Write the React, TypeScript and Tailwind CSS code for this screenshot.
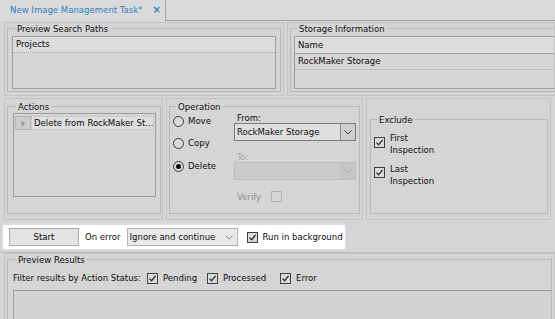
import React from 'react';

const font = "font-['DejaVu_Sans_Condensed','Liberation_Sans',sans-serif]";

function GroupBox({ title, className, children }: { title: string; className?: string; children?: React.ReactNode }) {
    return (
        <fieldset className={`border border-[#b7b7b7] ${className ?? ''}`}>
            <legend className="ml-[3px] px-[2px] leading-[11px] text-[#111]">{title}</legend>
            {children}
        </fieldset>
    );
}

function CheckBox({ checked, disabled }: { checked?: boolean; disabled?: boolean }) {
    return (
        <span
            className={`flex h-[11px] w-[11px] shrink-0 items-center justify-center border ${
                disabled ? 'border-[#b0b0b0] bg-[#d6d6d6]' : 'border-[#3e3e3e] bg-[#dadada]'
            }`}
        >
            {checked && (
                <svg width="9" height="9" viewBox="0 0 9 9">
                    <path d="M1.5 4.6 L3.6 6.7 L7.6 1.9" fill="none" stroke="#2a2a2a" strokeWidth="1.3" />
                </svg>
            )}
        </span>
    );
}

function Radio({ label, checked }: { label: string; checked?: boolean }) {
    return (
        <div className="flex h-[16px] items-center gap-[4px]">
            <span className="flex h-[11px] w-[11px] items-center justify-center rounded-full border border-[#3a3a3a] bg-[#dadada]">
                {checked && <span className="h-[5px] w-[5px] rounded-full bg-[#111]" />}
            </span>
            <span>{label}</span>
        </div>
    );
}

function Chevron({ color }: { color: string }) {
    return (
        <svg width="8" height="5" viewBox="0 0 8 5">
            <path d="M0.5 0.5 L4 4 L7.5 0.5" fill="none" stroke={color} strokeWidth="1" />
        </svg>
    );
}

function Select({ value, disabled }: { value?: string; disabled?: boolean }) {
    return (
        <div
            className={`flex h-[18px] w-[122px] border ${
                disabled ? 'border-[#bcbcbc] bg-[#cbcbcb]' : 'border-[#7c7c7c] bg-[#dedede]'
            }`}
        >
            <div className="flex flex-1 items-center pl-[2px] text-[#111]">{value}</div>
            <div
                className={`flex w-[15px] items-center justify-center border-l ${
                    disabled ? 'border-[#c4c4c4] bg-[#c6c6c6]' : 'border-[#8a8a8a] bg-[#cfcfcf]'
                }`}
            >
                <Chevron color={disabled ? '#a9a9a9' : '#444'} />
            </div>
        </div>
    );
}

export default function App() {
    return (
        <div className={`h-[319px] w-[555px] overflow-hidden bg-[#d5d5d5] text-[9.5px] text-[#0d0d0d] ${font}`}>
            {/* tab strip */}
            <div className="flex h-[21px] bg-[#d9d9d9]">
                <div className="flex w-[166px] items-center border-r border-[#a3a3a3] bg-[#dadada] pl-[10px]">
                    <span className="text-[#2f7fc4]">New Image Management Task*</span>
                    <span className="ml-[10px] text-[11px] font-bold text-[#2f7fc4]">×</span>
                </div>
                <div className="flex-1 border-b border-[#a3a3a3]" />
            </div>

            {/* row 1 */}
            <div className="flex h-[75px] gap-[3px] pl-[4px] pt-[1px]">
                <div className="w-[282px] border border-[#c3c3c3] px-[2px]">
                    <GroupBox title="Preview Search Paths" className="h-[69px] pl-[4px] pr-[4px]">
                        <div className="mt-[2px] h-[53px] border border-[#9d9d9d]">
                            <div className="flex h-[16px] items-center border-b border-dotted border-[#a6a6a6] bg-[#dcdcdc] pl-[3px]">
                                Projects
                            </div>
                        </div>
                    </GroupBox>
                </div>
                <div className="w-[270px] border border-[#c3c3c3] pl-[2px]">
                    <GroupBox title="Storage Information" className="h-[69px] border-r-0 pl-[3px]">
                        <div className="mt-[2px] h-[53px] border border-r-0 border-[#9d9d9d]">
                            <div className="flex h-[17px] items-center border-b border-[#a0a0a0] bg-[#dcdcdc] pl-[3px]">
                                Name
                            </div>
                            <div className="flex h-[16px] items-center border-b border-dotted border-[#a6a6a6] pl-[3px]">
                                RockMaker Storage
                            </div>
                        </div>
                    </GroupBox>
                </div>
            </div>

            {/* row 2 */}
            <div className="mt-[2px] flex h-[122px] gap-[3px] pl-[4px]">
                <div className="w-[159px] border border-[#c3c3c3] px-[2px] pt-[2px]">
                    <GroupBox title="Actions" className="h-[113px] pl-[5px] pr-[4px]">
                        <div className="mt-[1px] h-[84px] border border-[#9d9d9d] px-[1px] pt-[2px]">
                            <div className="flex h-[14px]">
                                <div className="flex w-[16px] items-center justify-center border border-[#b4b4b4] bg-[#cdcdcd]">
                                    <svg width="5" height="7" viewBox="0 0 5 7">
                                        <path d="M0.5 0.5 L4.5 3.5 L0.5 6.5 Z" fill="#9a9a9a" />
                                    </svg>
                                </div>
                                <div className="flex flex-1 items-center overflow-hidden whitespace-nowrap border border-dotted border-[#b9b9b9] bg-[#dedede] pl-[2px]">
                                    Delete from RockMaker St...
                                </div>
                            </div>
                        </div>
                    </GroupBox>
                </div>

                <div className="w-[197px] border border-[#c3c3c3] px-[2px] pt-[2px]">
                    <GroupBox title="Operation" className="flex h-[113px] pl-[3px]">
                        <div className="flex w-[61px] flex-col pt-[1px]">
                            <Radio label="Move" />
                            <div className="mt-[6px]">
                                <Radio label="Copy" />
                            </div>
                            <div className="mt-[7px]">
                                <Radio label="Delete" checked />
                            </div>
                        </div>
                        <div className="flex flex-col">
                            <div className="pl-[3px] leading-[11px]">From:</div>
                            <Select value="RockMaker Storage" />
                            <div className="mt-[10px] pl-[3px] leading-[11px] text-[#a3a3a3]">To:</div>
                            <Select disabled />
                            <div className="mt-[11px] flex items-center pl-[3px] leading-[11px] text-[#8f8f8f]">
                                <span className="w-[34px]">Verify</span>
                                <CheckBox disabled />
                            </div>
                        </div>
                    </GroupBox>
                </div>

                <div className="w-[185px] border border-[#c3c3c3] pl-[3px] pr-[2px] pt-[15px]">
                    <GroupBox title="Exclude" className="h-[100px] pl-[3px]">
                        <div className="mt-[7px] flex gap-[5px] leading-[12px]">
                            <div className="mt-[5px]">
                                <CheckBox checked />
                            </div>
                            <div>
                                <div>First</div>
                                <div>Inspection</div>
                            </div>
                        </div>
                        <div className="mt-[7px] flex gap-[5px] leading-[12px]">
                            <div className="mt-[4px]">
                                <CheckBox checked />
                            </div>
                            <div>
                                <div>Last</div>
                                <div>Inspection</div>
                            </div>
                        </div>
                    </GroupBox>
                </div>
            </div>

            {/* toolbar */}
            <div className="flex h-[33px] border-b border-[#bdbdbd] pl-[3px] pt-[5px]">
                <div className="flex h-[24px] w-[342px] items-center rounded-[1px] bg-white pl-[6px] shadow-[0_0_2px_#f4f4f4]">
                    <div className="flex h-[18px] w-[70px] items-center justify-center border border-[#adadad] bg-[#e3e3e3]">
                        Start
                    </div>
                    <span className="ml-[6px]">On error</span>
                    <div className="ml-[6px] flex h-[18px] w-[111px] items-center border border-[#b3b3b3] bg-[#e9e9e9] pl-[2px]">
                        <span className="flex-1">Ignore and continue</span>
                        <span className="mr-[4px]">
                            <Chevron color="#8a8a8a" />
                        </span>
                    </div>
                    <span className="ml-[9px]">
                        <CheckBox checked />
                    </span>
                    <span className="ml-[5px]">Run in background</span>
                </div>
            </div>

            {/* preview results */}
            <div className="ml-[4px] h-[70px] border border-[#c3c3c3] px-[2px]">
                <GroupBox title="Preview Results" className="h-[80px] pl-[5px]">
                    <div className="mt-[7px] flex h-[12px] items-center">
                        <span className="w-[134px]">Filter results by Action Status:</span>
                        <CheckBox checked />
                        <span className="ml-[5px] w-[44px]">Pending</span>
                        <CheckBox checked />
                        <span className="ml-[5px] w-[57px]">Processed</span>
                        <CheckBox checked />
                        <span className="ml-[5px]">Error</span>
                    </div>
                    <div className="mt-[6px] h-[40px] border border-r-0 border-[#9a9a9a] bg-[#d3d3d3]" />
                </GroupBox>
            </div>
        </div>
    );
}
